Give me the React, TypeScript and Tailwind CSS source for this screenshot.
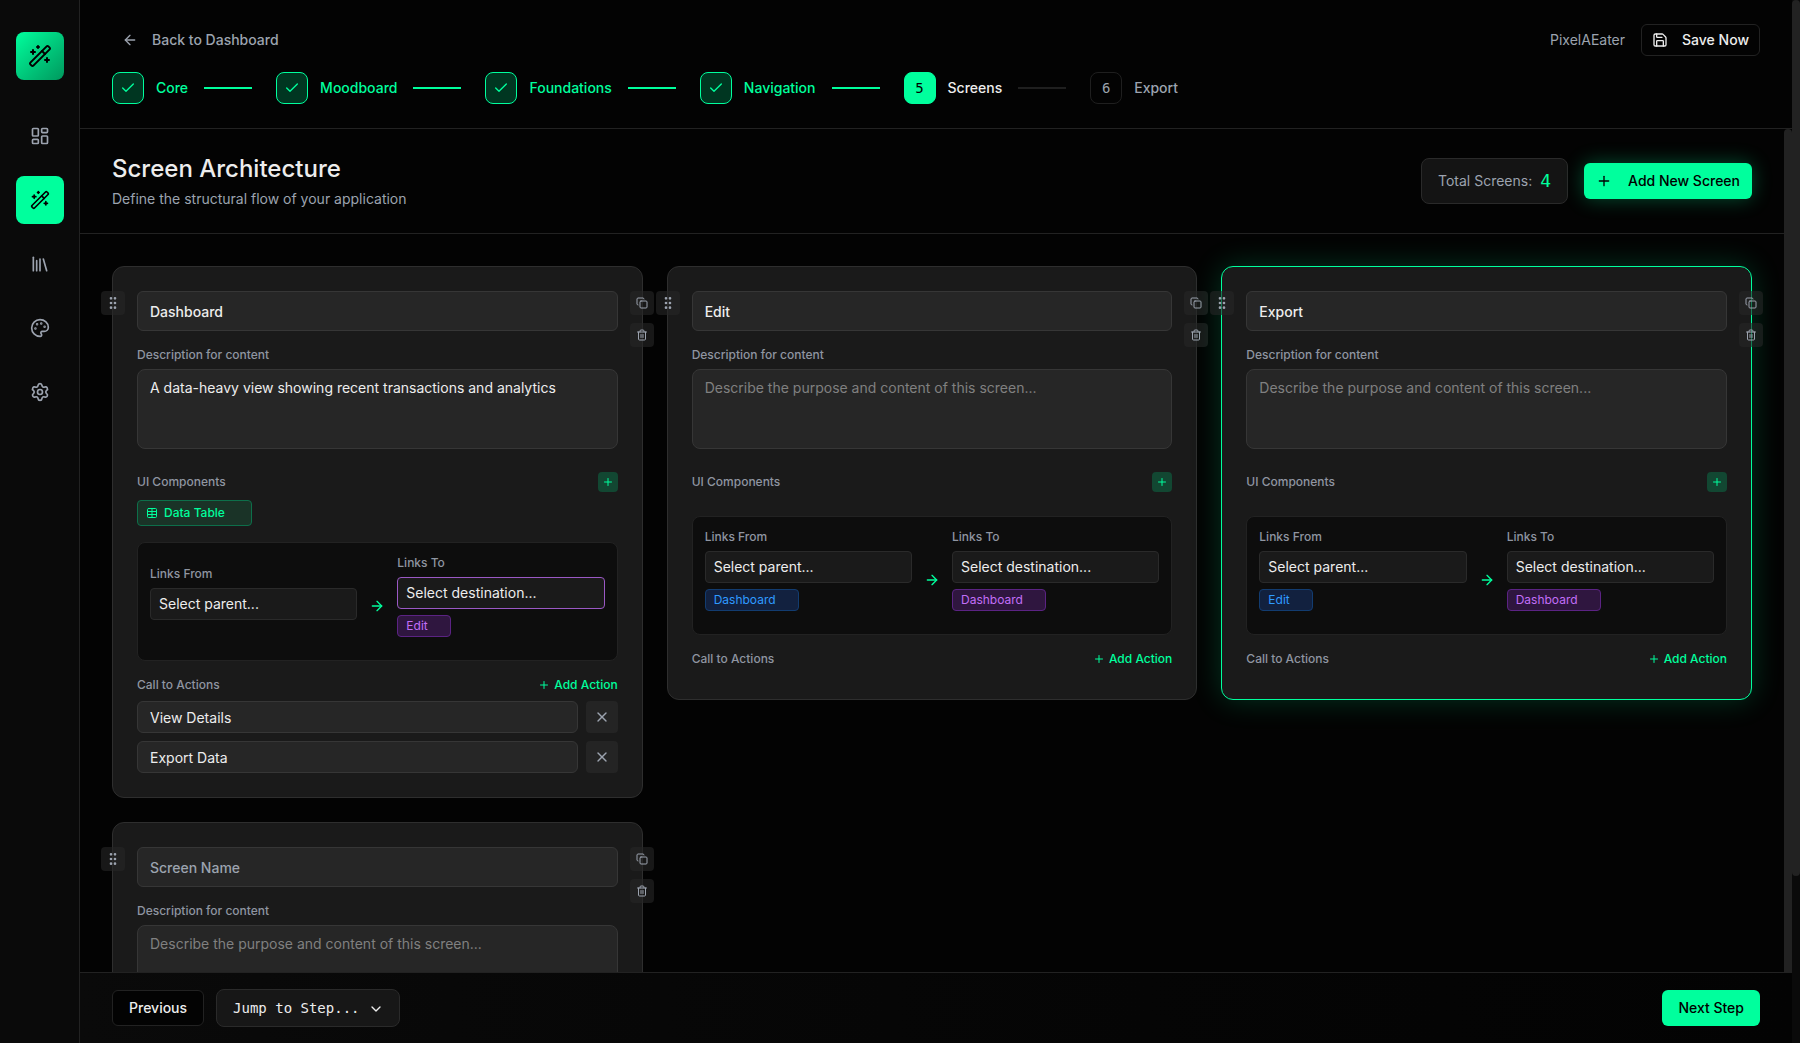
import { useState } from 'react';
import type { ReactNode } from 'react';
import {
  ArrowLeft,
  ArrowRight,
  Check,
  ChevronDown,
  Copy,
  GripVertical,
  LayoutDashboard,
  Library,
  Palette,
  Plus,
  Save,
  Settings,
  Table,
  Trash2,
  WandSparkles,
  X,
} from 'lucide-react';

type Screen = {
  id: string;
  name: string;
  description: string;
  components: string[];
  linksFrom: string[];
  linksTo: string[];
  actions: string[];
};

const initialScreens: Screen[] = [
  {
    id: 'dashboard',
    name: 'Dashboard',
    description: 'A data-heavy view showing recent transactions and analytics',
    components: ['Data Table'],
    linksFrom: [],
    linksTo: ['Edit'],
    actions: ['View Details', 'Export Data'],
  },
  { id: 'edit', name: 'Edit', description: '', components: [], linksFrom: ['Dashboard'], linksTo: ['Dashboard'], actions: [] },
  { id: 'export', name: 'Export', description: '', components: [], linksFrom: ['Edit'], linksTo: ['Dashboard'], actions: [] },
  { id: 'untitled', name: '', description: '', components: [], linksFrom: [], linksTo: [], actions: [] },
];

const steps = ['Core', 'Moodboard', 'Foundations', 'Navigation', 'Screens', 'Export'];
const currentStep = 4;

const navItems = [
  { label: 'Dashboard', icon: LayoutDashboard, active: false },
  { label: 'Wizard', icon: WandSparkles, active: true },
  { label: 'Library', icon: Library, active: false },
  { label: 'Themes', icon: Palette, active: false },
  { label: 'Settings', icon: Settings, active: false },
];

function Sidebar() {
  return (
    <aside className="flex w-20 shrink-0 flex-col items-center border-r border-[#222222] bg-[#0a0a0a] pt-8">
      <div className="mb-8 flex size-12 items-center justify-center rounded-lg bg-linear-to-br from-[#00ff9d] to-[#00995e] text-black">
        <WandSparkles size={24} />
      </div>
      <nav className="flex flex-col gap-4">
        {navItems.map(({ label, icon: Icon, active }) => (
          <a
            key={label}
            href="#"
            aria-label={label}
            className={`flex size-12 items-center justify-center rounded-lg ${
              active ? 'bg-[#00ff9d] text-black' : 'text-[#9ca3af] hover:text-white'
            }`}
          >
            <Icon size={20} />
          </a>
        ))}
      </nav>
    </aside>
  );
}

function Stepper() {
  return (
    <ol className="mt-4 flex items-center gap-2 text-sm font-medium">
      {steps.map((step, i) => {
        const done = i < currentStep;
        const active = i === currentStep;
        return (
          <li key={step} className="flex items-center">
            <button className="flex items-center gap-3">
              <span
                className={`flex size-8 items-center justify-center rounded-lg border font-['DejaVu_Sans_Mono',monospace] font-normal ${
                  done
                    ? 'border-[#00ff9d] bg-[#003621] text-[#00ff9d]'
                    : active
                      ? 'border-[#00ff9d] bg-[#00ff9d] text-black'
                      : 'border-[#1f1f1f] text-[#9ca3af]'
                }`}
              >
                {done ? <Check size={16} /> : i + 1}
              </span>
              <span className={done ? 'text-[#00ff9d]' : active ? 'text-[#ededed]' : 'text-[#9ca3af]'}>{step}</span>
            </button>
            {i < steps.length - 1 && <span className={`mx-4 h-0.5 w-12 ${done ? 'bg-[#00ff9d]' : 'bg-[#1f1f1f]'}`} />}
          </li>
        );
      })}
    </ol>
  );
}

function Header() {
  return (
    <header className="shrink-0 border-b border-[#222222] px-8 py-6">
      <div className="flex items-center justify-between">
        <button className="flex h-8 items-center gap-3.5 px-2.5 text-sm font-medium text-[#9ca3af] hover:text-white">
          <ArrowLeft size={16} />
          Back to Dashboard
        </button>
        <div className="flex items-center gap-4">
          <span className="text-sm text-[#9ca3af]">PixelAEater</span>
          <button className="flex h-8 items-center gap-3.5 rounded-md border border-[#222222] px-2.5 text-sm font-medium text-[#ededed]">
            <Save size={16} />
            Save Now
          </button>
        </div>
      </div>
      <Stepper />
    </header>
  );
}

function CardTool({ label, children }: { label: string; children: ReactNode }) {
  return (
    <button
      aria-label={label}
      className="flex size-6 items-center justify-center rounded-sm bg-[#262626]/60 text-[#9ca3af] hover:text-white"
    >
      {children}
    </button>
  );
}

type LinkColumnProps = {
  id: string;
  label: string;
  placeholder: string;
  tags: string[];
  tagClass: string;
  focused?: boolean;
};

function LinkColumn({ id, label, placeholder, tags, tagClass, focused }: LinkColumnProps) {
  return (
    <div className="min-w-0 flex-1">
      <label htmlFor={id} className="block text-xs font-medium text-[#8f95a1]">
        {label}
      </label>
      <select
        id={id}
        className={`mt-1.5 block h-8 w-full appearance-none rounded-sm border bg-[#1a1a1a] px-2 text-sm text-[#ededed] outline-none ${
          focused ? 'border-[#9a58c4]' : 'border-[#2a2a2a]'
        }`}
      >
        <option>{placeholder}</option>
      </select>
      <div className="mt-1.5 flex flex-wrap gap-1 pb-[11px]">
        {tags.map((tag) => (
          <span key={tag} className={`rounded-sm border py-0.5 pr-[22px] pl-2 text-xs ${tagClass}`}>
            {tag}
          </span>
        ))}
      </div>
    </div>
  );
}

function ScreenCard({ screen, selected, linking }: { screen: Screen; selected: boolean; linking: boolean }) {
  const { id } = screen;
  return (
    <article
      className={`relative rounded-xl border bg-[#1a1a1a] p-6 ${
        selected ? 'border-[#00ff9d] shadow-[0_0_30px_rgba(0,255,157,0.2)]' : 'border-[#2e2e2e]'
      }`}
    >
      <div className="absolute top-6 -left-3">
        <CardTool label="Drag screen">
          <GripVertical size={16} />
        </CardTool>
      </div>
      <div className="absolute top-6 -right-3 flex flex-col gap-2">
        <CardTool label="Duplicate screen">
          <Copy size={12} />
        </CardTool>
        <CardTool label="Delete screen">
          <Trash2 size={12} />
        </CardTool>
      </div>

      <input
        aria-label="Screen name"
        defaultValue={screen.name}
        placeholder="Screen Name"
        className="block h-10 w-full rounded-md border border-[#363636] bg-[#262626] px-3 text-sm font-medium text-[#ededed] outline-none placeholder:text-[#9ca3af]"
      />

      <label htmlFor={`${id}-description`} className="mt-4 block text-xs font-medium text-[#8f95a1]">
        Description for content
      </label>
      <textarea
        id={`${id}-description`}
        defaultValue={screen.description}
        placeholder="Describe the purpose and content of this screen..."
        className="mt-1.5 block h-20 w-full resize-none rounded-lg border border-[#363636] bg-[#262626] px-3 py-2 text-sm text-[#ededed] outline-none placeholder:text-[#808080]"
      />

      {/* Components */}
      <div className="mt-[23px] flex h-5 items-center justify-between">
        <h3 className="text-xs font-medium text-[#8f95a1]">UI Components</h3>
        <button
          aria-label="Add component"
          className="flex size-5 items-center justify-center rounded-sm bg-[#124732] text-[#00ff9d]"
        >
          <Plus size={12} />
        </button>
      </div>
      <div className="mt-2 flex flex-wrap gap-2">
        {screen.components.map((component) => (
          <span
            key={component}
            className="flex items-center gap-1.5 rounded-sm border border-[#0d6f4a] bg-[#1a3327] py-1 pr-[26px] pl-2 text-xs font-medium text-[#00ff9d]"
          >
            <Table size={12} />
            {component}
          </span>
        ))}
      </div>

      {/* Links */}
      <div className="mt-4 flex items-center gap-3 rounded-lg border border-[#222222] bg-[#0d0d0d] p-3">
        <LinkColumn
          id={`${id}-from`}
          label="Links From"
          placeholder="Select parent..."
          tags={screen.linksFrom}
          tagClass="border-[#123c70] bg-[#12213f] text-[#2f9bff]"
        />
        <ArrowRight size={16} className="mt-2 shrink-0 text-[#00ff9d]" />
        <LinkColumn
          id={`${id}-to`}
          label="Links To"
          placeholder="Select destination..."
          tags={screen.linksTo}
          tagClass="border-[#5b2383] bg-[#2f163f] text-[#c26ef7]"
          focused={linking}
        />
      </div>

      {/* Actions */}
      <div className="mt-4 flex items-center justify-between text-xs font-medium">
        <h3 className="text-[#8f95a1]">Call to Actions</h3>
        <button className="flex items-center gap-1 text-[#00ff9d]">
          <Plus size={12} />
          Add Action
        </button>
      </div>
      <div className="mt-2 flex flex-col gap-2">
        {screen.actions.map((action) => (
          <div key={action} className="flex gap-2">
            <input
              aria-label="Action name"
              defaultValue={action}
              className="h-8 min-w-0 flex-1 rounded-md border border-[#363636] bg-[#262626] px-3 text-sm text-[#ededed] outline-none"
            />
            <button
              aria-label={`Remove ${action}`}
              className="flex size-8 items-center justify-center rounded-sm bg-[#242424] text-[#9ca3af]"
            >
              <X size={16} />
            </button>
          </div>
        ))}
      </div>
    </article>
  );
}

export default function App() {
  const [screens, setScreens] = useState(initialScreens);

  const addScreen = () => {
    setScreens([
      ...screens,
      { id: `screen-${screens.length}`, name: '', description: '', components: [], linksFrom: [], linksTo: [], actions: [] },
    ]);
  };

  return (
    <div className="flex h-screen overflow-hidden bg-[#030303] font-[Inter,sans-serif] text-[#ededed]">
      <Sidebar />
      <div className="flex min-w-0 flex-1 flex-col">
        <Header />
        <div className="flex min-h-0 flex-1">
          <main className="min-w-0 flex-1 overflow-y-auto [scrollbar-width:none]">
            <div className="flex items-center justify-between border-b border-[#222222] px-8 py-6">
              <div>
                <h1 className="text-2xl font-medium">Screen Architecture</h1>
                <p className="mt-1 text-sm text-[#9ca3af]">Define the structural flow of your application</p>
              </div>
              <div className="flex items-center gap-4">
                <div className="flex items-center gap-2 rounded-lg border border-[#2a2a2a] bg-[#141414] px-4 py-2">
                  <span className="text-sm text-[#9ca3af]">Total Screens:</span>
                  <span className="font-['DejaVu_Sans_Mono',monospace] text-lg text-[#00ff9d]">{screens.length}</span>
                </div>
                <button
                  onClick={addScreen}
                  className="flex h-9 items-center gap-4 rounded-md bg-[#00ff9d] px-3 text-sm font-medium text-black shadow-[0_0_20px_rgba(0,255,157,0.3)]"
                >
                  <Plus size={16} />
                  Add New Screen
                </button>
              </div>
            </div>
            <div className="grid grid-cols-3 items-start gap-6 p-8">
              {screens.map((screen) => (
                <ScreenCard
                  key={screen.id}
                  screen={screen}
                  selected={screen.id === 'export'}
                  linking={screen.id === 'dashboard'}
                />
              ))}
            </div>
          </main>
          <div className="w-2 shrink-0 rounded-t-sm bg-[#222222]" />
        </div>
        <footer className="flex shrink-0 items-center justify-between border-t border-[#222222] bg-linear-to-r from-[#0a0a0a] to-[#030303] px-8 py-4">
          <div className="flex items-center gap-3">
            <button className="h-9 rounded-md border border-[#222222] bg-[#030303] px-4 text-sm font-medium">Previous</button>
            <div className="relative">
              <select
                aria-label="Jump to step"
                className="block h-[38px] w-46 appearance-none rounded-lg border border-[#2a2a2a] bg-[#171717] px-4 font-['DejaVu_Sans_Mono',monospace] text-sm outline-none"
              >
                <option>Jump to Step...</option>
                {steps.map((step) => (
                  <option key={step}>{step}</option>
                ))}
              </select>
              <ChevronDown size={16} className="pointer-events-none absolute top-3 right-4" />
            </div>
          </div>
          <button className="h-9 rounded-md bg-[#00ff9d] px-4 text-sm font-medium text-black">Next Step</button>
        </footer>
      </div>
      {/* Page scrollbar */}
      <div className="w-2 shrink-0 bg-[#0a0a0a]">
        <div className="h-[84%] rounded-sm bg-[#222222]" />
      </div>
    </div>
  );
}
